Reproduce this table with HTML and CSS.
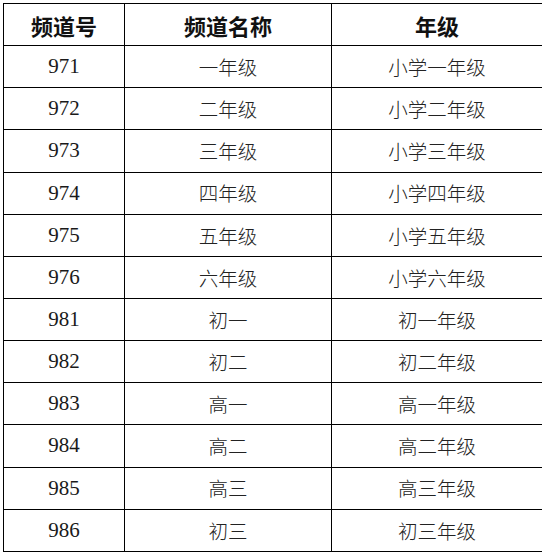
FILE: index.html
```html
<!DOCTYPE html>
<html lang="zh">
<head>
<meta charset="utf-8">
<link rel="stylesheet" href="styles.css">
</head>
<body>
<div class="wrap">
<table class="grid">
  <colgroup>
    <col class="c1">
    <col class="c2">
    <col class="c3">
  </colgroup>
  <thead>
    <tr><th>频道号</th><th>频道名称</th><th>年级</th></tr>
  </thead>
  <tbody>
    <tr><td class="num">971</td><td>一年级</td><td>小学一年级</td></tr>
    <tr><td class="num">972</td><td>二年级</td><td>小学二年级</td></tr>
    <tr><td class="num">973</td><td>三年级</td><td>小学三年级</td></tr>
    <tr><td class="num">974</td><td>四年级</td><td>小学四年级</td></tr>
    <tr><td class="num">975</td><td>五年级</td><td>小学五年级</td></tr>
    <tr><td class="num">976</td><td>六年级</td><td>小学六年级</td></tr>
    <tr><td class="num">981</td><td>初一</td><td>初一年级</td></tr>
    <tr><td class="num">982</td><td>初二</td><td>初二年级</td></tr>
    <tr><td class="num">983</td><td>高一</td><td>高一年级</td></tr>
    <tr><td class="num">984</td><td>高二</td><td>高二年级</td></tr>
    <tr><td class="num">985</td><td>高三</td><td>高三年级</td></tr>
    <tr><td class="num">986</td><td>初三</td><td>初三年级</td></tr>
  </tbody>
</table>
</div>
</body>
</html>
```

FILE: styles.css
```css
html, body {
  margin: 0;
  padding: 0;
  background: #fff;
}

.wrap {
  padding: 3px 0 0 3px;
}

.grid {
  border-collapse: collapse;
  table-layout: fixed;
  width: 539px;
  font-family: "Liberation Serif", "Noto Sans CJK SC", serif;
  color: #1a1a1a;
}

.c1 { width: 121px; }
.c2 { width: 207px; }
.c3 { width: 211px; }

.grid th,
.grid td {
  border: 1px solid #000;
  padding: 0;
  text-align: center;
  vertical-align: middle;
  height: 41.15px;
  line-height: 1;
}

.grid th {
  font-family: "Noto Sans CJK SC", sans-serif;
  font-weight: 700;
  font-size: 22px;
  color: #111;
}

.grid td {
  font-family: "Noto Sans CJK SC", sans-serif;
  font-weight: 300;
  font-size: 19.5px;
  color: #222;
}

.grid td.num {
  font-family: "Liberation Serif", serif;
  font-weight: 400;
  font-size: 21px;
  color: #1a1a1a;
}
```
